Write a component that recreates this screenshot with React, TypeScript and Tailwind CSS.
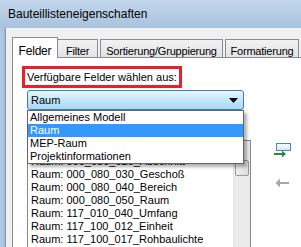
import React from "react";

const items = [
  "",
  "Raum: 000_080_020_Abschnitt",
  "Raum: 000_080_030_Geschoß",
  "Raum: 000_080_040_Bereich",
  "Raum: 000_080_050_Raum",
  "Raum: 117_010_040_Umfang",
  "Raum: 117_100_012_Einheit",
  "Raum: 117_100_017_Rohbaulichte",
  "Raum: 117_100_020_Raumnummer",
];

const options = ["Allgemeines Modell", "Raum", "MEP-Raum", "Projektinformationen"];

function AddIcon() {
  return (
    <svg width="18" height="18" viewBox="0 0 18 18">
      <defs>
        <linearGradient id="fld" x1="0" y1="0" x2="0" y2="1">
          <stop offset="0" stopColor="#ffffff" />
          <stop offset="1" stopColor="#cfe4f7" />
        </linearGradient>
      </defs>
      <rect x="2.5" y="2.5" width="14" height="7" fill="url(#fld)" stroke="#4a86c5" />
      <rect x="0" y="12" width="9" height="2" fill="#2e8b3a" />
      <polygon points="8,9.5 12,13 8,16.5" fill="#2e8b3a" />
    </svg>
  );
}

function RemoveIcon() {
  return (
    <svg width="14" height="10" viewBox="0 0 14 10">
      <rect x="4" y="4" width="10" height="2" fill="#a8a8a8" />
      <polygon points="5,0.5 0.5,5 5,9.5" fill="#a8a8a8" />
    </svg>
  );
}

export default function App() {
  return (
    <div className="w-[301px] h-[247px] overflow-hidden bg-[#a9c2dc] font-['Liberation_Sans',Arial,sans-serif] text-black">
      <div className="h-[28px] flex items-center pl-[8px] text-[12px] bg-gradient-to-b from-[#c3d7ec] to-[#a8c2de]">
        Bauteillisteneigenschaften
      </div>
      <div className="flex h-[219px]">
        <div className="w-[6px] shrink-0 bg-gradient-to-r from-[#b7cce3] to-[#a3bcd7] border-r border-[#7e95ae]" />
        <div className="flex-1 bg-[#f0f0f0] pl-[6px] pt-[8px]">
          <div className="flex items-end h-[21px] text-[11px] tracking-[-0.2px]">
            <div className="relative z-10 w-[46px] h-[21px] -mb-px bg-white border border-b-0 border-[#898c95] flex justify-center pt-[4px] text-[12px]">
              Felder
            </div>
            <div className="w-[40px] h-[18px] border border-l-0 border-b-0 border-[#898c95] bg-gradient-to-b from-[#f2f2f2] to-[#e3e3e3] flex justify-center pt-[3px]">
              Filter
            </div>
            <div className="ml-[2px] w-[123px] h-[18px] border border-b-0 border-[#898c95] bg-gradient-to-b from-[#f2f2f2] to-[#e3e3e3] flex justify-center pt-[3px]">
              Sortierung/Gruppierung
            </div>
            <div className="ml-[2px] w-[74px] h-[18px] border border-b-0 border-[#898c95] bg-gradient-to-b from-[#f2f2f2] to-[#e3e3e3] flex justify-center pt-[3px]">
              Formatierung
            </div>
          </div>
          <div className="h-[200px] w-[300px] bg-white border-l border-t border-[#898c95] pl-[9px] pt-[8px] text-[11px]">
            <div className="w-[160px] h-[22px] border-[3px] border-[#e8202a] pl-[2px] flex items-center">
              Verfügbare Felder wählen aus:
            </div>
            <div className="relative ml-[5px] mt-[2px] w-[217px]">
              <div className="h-[20px] rounded-[3px] border border-[#3c7fb1] bg-gradient-to-b from-[#eaf6fd] via-[#c5e6f9] to-[#a7d9f5] flex items-center pl-[3px] pr-[5px] justify-between">
                <span>Raum</span>
                <svg width="9" height="5" viewBox="0 0 9 5">
                  <polygon points="0,0 9,0 4.5,5" fill="#000" />
                </svg>
              </div>
              <div className="absolute z-20 left-0 top-[20px] w-[217px] bg-white border border-[#646464] shadow-[3px_3px_3px_rgba(0,0,0,0.3)]">
                {options.map((o) => (
                  <div
                    key={o}
                    className={`h-[13px] leading-[13px] pl-[2px] ${o === "Raum" ? "bg-[#3399ff] text-white" : ""}`}
                  >
                    {o}
                  </div>
                ))}
              </div>
            </div>
            <div className="flex mt-[30px] ml-[5px]">
              <div className="w-[224px] h-[120px] border border-[#828790] flex">
                <div className="flex-1 pt-[1px] pl-[3px]">
                  {items.map((t, i) => (
                    <div key={i} className="h-[13px] leading-[13px] whitespace-nowrap">
                      {t}
                    </div>
                  ))}
                </div>
                <div className="w-[17px] bg-[#ebebeb] border-l border-[#e3e3e3] flex flex-col">
                  <div className="h-[17px]" />
                  <div className="mx-[1px] mt-[2px] h-[16px] border border-[#9a9a9a] rounded-[2px] bg-gradient-to-r from-[#f0f0f0] to-[#dcdcdc]" />
                </div>
              </div>
              <div className="ml-[23px] mt-[1px] flex flex-col items-start">
                <AddIcon />
                <div className="mt-[19px] ml-[1px]">
                  <RemoveIcon />
                </div>
              </div>
            </div>
          </div>
        </div>
      </div>
    </div>
  );
}
